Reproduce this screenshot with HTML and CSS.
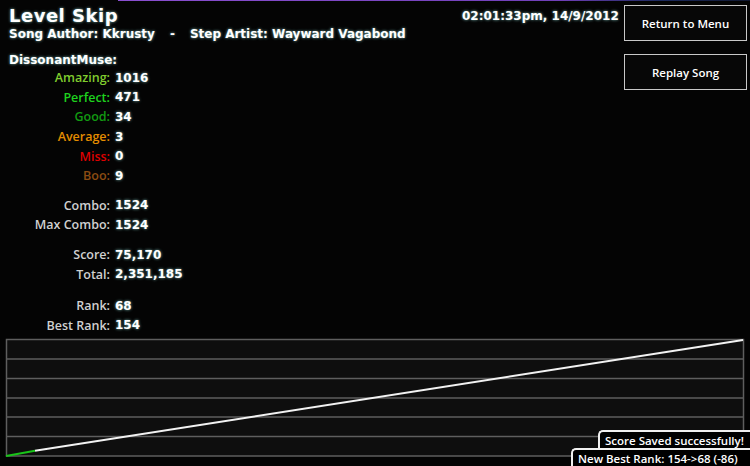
FILE: index.html
```html
<!DOCTYPE html>
<html lang="en">
<head>
    <meta charset="UTF-8">
    <title>Level Skip - Results</title>
    <link rel="stylesheet" href="styles.css">
</head>
<body>
    <div class="screen">
        <div class="top">
            <!-- Song info + player stats -->
            <div class="left">
                <h1>Level Skip</h1>
                <p class="credits">Song Author: Kkrusty<span class="sep">-</span>Step Artist: Wayward Vagabond</p>
                <p class="player">DissonantMuse:</p>

                <div class="group">
                    <div class="row"><span class="label amazing">Amazing:</span><span class="value">1016</span></div>
                    <div class="row"><span class="label perfect">Perfect:</span><span class="value">471</span></div>
                    <div class="row"><span class="label good">Good:</span><span class="value">34</span></div>
                    <div class="row"><span class="label average">Average:</span><span class="value">3</span></div>
                    <div class="row"><span class="label miss">Miss:</span><span class="value">0</span></div>
                    <div class="row"><span class="label boo">Boo:</span><span class="value">9</span></div>
                </div>
                <div class="group combo">
                    <div class="row"><span class="label">Combo:</span><span class="value">1524</span></div>
                    <div class="row"><span class="label">Max Combo:</span><span class="value">1524</span></div>
                </div>
                <div class="group score">
                    <div class="row"><span class="label">Score:</span><span class="value">75,170</span></div>
                    <div class="row"><span class="label">Total:</span><span class="value">2,351,185</span></div>
                </div>
                <div class="group rank">
                    <div class="row"><span class="label">Rank:</span><span class="value">68</span></div>
                    <div class="row"><span class="label">Best Rank:</span><span class="value">154</span></div>
                </div>
            </div>

            <div class="clock">02:01:33pm, 14/9/2012</div>

            <div class="menu">
                <button class="menu-btn">Return to Menu</button>
                <button class="menu-btn">Replay Song</button>
            </div>
        </div>

        <!-- Life graph -->
        <div class="graph">
            <svg width="750" height="120" viewBox="0 0 750 120">
                <rect x="6.5" y="1.5" width="737" height="116.5" fill="#0e0e0e" stroke="#5e5e5e" stroke-width="1.5"/>
                <g stroke="#5e5e5e" stroke-width="1.5">
                    <line x1="6.5" y1="21" x2="743.5" y2="21"/>
                    <line x1="6.5" y1="40.5" x2="743.5" y2="40.5"/>
                    <line x1="6.5" y1="60" x2="743.5" y2="60"/>
                    <line x1="6.5" y1="79" x2="743.5" y2="79"/>
                    <line x1="6.5" y1="98.5" x2="743.5" y2="98.5"/>
                </g>
                <line x1="35" y1="112.7" x2="743" y2="2" stroke="#f2f2f2" stroke-width="2"/>
                <line x1="6" y1="118" x2="35" y2="112.7" stroke="#19c419" stroke-width="2"/>
            </svg>
        </div>

        <!-- Notifications -->
        <div class="toasts">
            <div class="toast saved">Score Saved successfully!</div>
            <div class="toast rank-up">New Best Rank: 154-&gt;68 (-86)</div>
        </div>
    </div>
</body>
</html>
```

FILE: styles.css
```css
* {
    margin: 0;
    padding: 0;
    box-sizing: border-box;
}

body {
    width: 750px;
    height: 466px;
    overflow: hidden;
    background: linear-gradient(to right, transparent 118px, #8a4fd0 118px, #7040b8 560px, #1c2a5e 660px, #101830 750px) top / 100% 1px no-repeat, #040404;
    color: white;
    font-family: 'DejaVu Sans', Verdana, sans-serif;
}

.screen {
    position: relative;
    width: 750px;
    height: 466px;
}

/* Header + stats */
.top {
    display: flex;
    height: 338px;
    padding: 6px 3px 0 9px;
}
.left {
    width: 453px;
}
h1 {
    font-size: 18px;
    line-height: 20px;
    letter-spacing: 0.5px;
    font-weight: bold;
    text-shadow: 0 0 3px rgba(150, 225, 220, 0.8);
}
.credits,
.player,
.clock,
.value {
    font-size: 12px;
    font-weight: bold;
    text-shadow: 0 0 3px rgba(150, 225, 220, 0.8);
}
.credits {
    line-height: 16px;
}
.sep {
    margin: 0 15px;
}
.player {
    line-height: 16px;
    margin-top: 10px;
}
.clock {
    width: 162px;
    padding-top: 2px;
    line-height: 16px;
}
.menu {
    display: flex;
    flex-direction: column;
    gap: 13px;
    margin-top: -1px;
}
.menu-btn {
    width: 123px;
    height: 36px;
    background: #070707;
    border: 1px solid #c8c8c8;
    color: white;
    font-family: 'Open Sans', 'Noto Sans', sans-serif;
    font-weight: 600;
    font-size: 11.5px;
    cursor: pointer;
}

/* Stat rows */
.group {
    margin-left: -9px;
}
.combo,
.score {
    margin-top: 10px;
}
.rank {
    margin-top: 12px;
}
.row {
    display: flex;
    align-items: center;
    gap: 5px;
    height: 19.6px;
}
.label {
    width: 110px;
    text-align: right;
    font-family: 'Open Sans', 'Noto Sans', sans-serif;
    font-weight: 600;
    font-size: 12.5px;
    color: #d0d0d0;
}
.amazing { color: #80cc2e; }
.perfect { color: #1ed21e; }
.good { color: #129a12; }
.average { color: #e38c00; }
.miss { color: #dd0000; }
.boo { color: #8c4c12; }

/* Graph */
.graph svg {
    display: block;
}

/* Notifications */
.toasts {
    position: absolute;
    right: 0;
    bottom: 0;
    display: flex;
    flex-direction: column;
    align-items: flex-end;
}
.toast {
    background: #000;
    border: 2px solid #f0f0f0;
    border-right: none;
    border-bottom: none;
    border-radius: 5px 0 0 0;
    font-family: 'Open Sans', 'Noto Sans', sans-serif;
    font-weight: 600;
    font-size: 11.5px;
    line-height: 16px;
    white-space: nowrap;
    padding: 1px 0 1px 5px;
}
.saved {
    width: 152px;
    height: 21px;
}
.rank-up {
    width: 179px;
    height: 18px;
    margin-top: -3px;
}
```
